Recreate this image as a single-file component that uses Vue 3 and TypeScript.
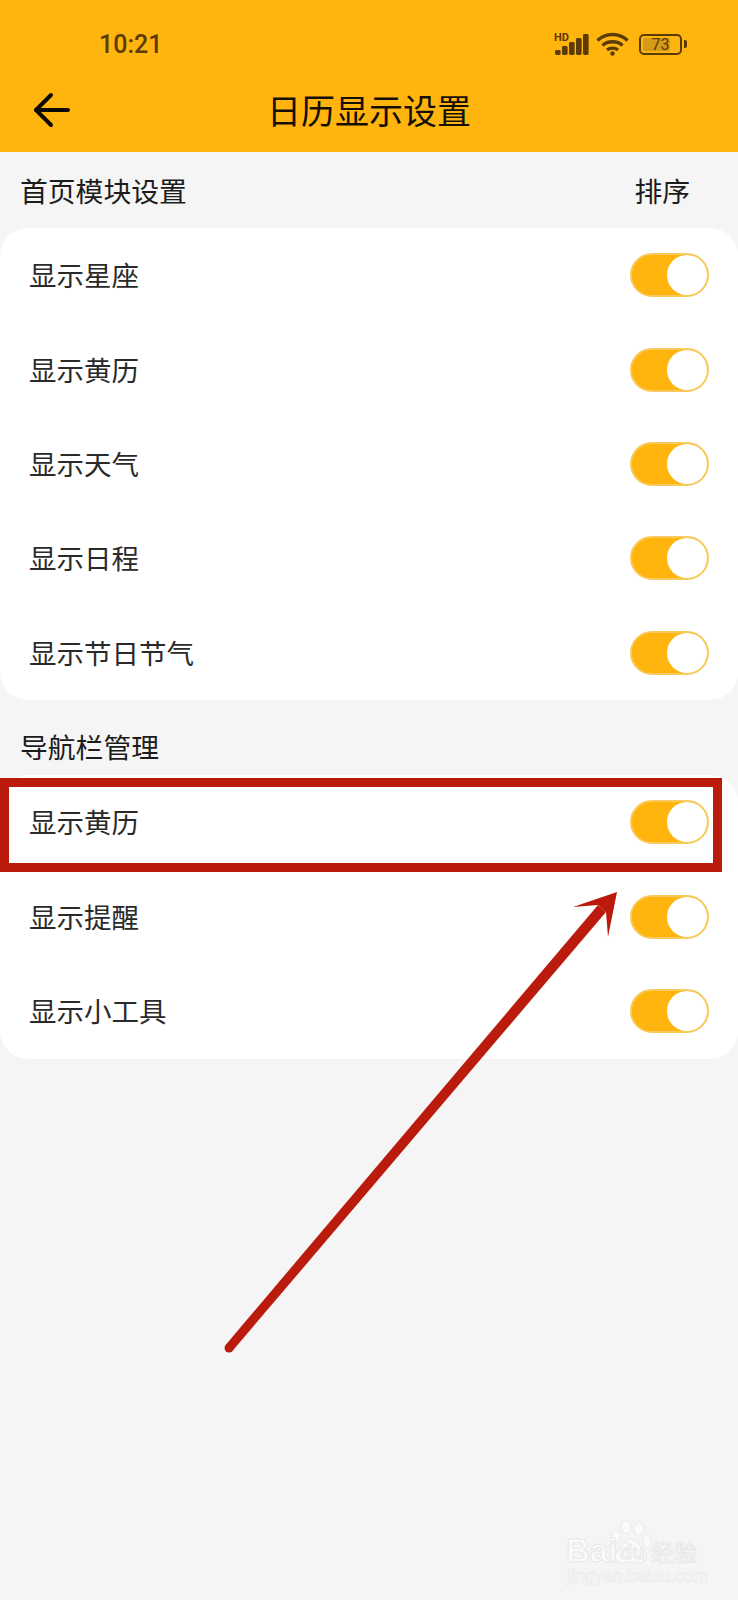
<script setup lang="ts">
import { ref } from 'vue'

interface ToggleRow {
  label: string
  on: boolean
}

const homeRows = ref<ToggleRow[]>([
  { label: '显示星座', on: true },
  { label: '显示黄历', on: true },
  { label: '显示天气', on: true },
  { label: '显示日程', on: true },
  { label: '显示节日节气', on: true },
])

const navRows = ref<ToggleRow[]>([
  { label: '显示黄历', on: true },
  { label: '显示提醒', on: true },
  { label: '显示小工具', on: true },
])

const signalBars = [
  { x: 0, h: 5 },
  { x: 7, h: 9 },
  { x: 14, h: 13 },
  { x: 21, h: 17 },
  { x: 28, h: 21 },
]
</script>

<template>
  <div class="page">
    <header class="app-header">
      <div class="status-bar">
        <span class="time">10:21</span>
        <div class="status-icons">
          <div class="signal">
            <span class="hd">HD</span>
            <svg width="34" height="21" viewBox="0 0 34 21">
              <rect
                v-for="bar in signalBars"
                :key="bar.x"
                :x="bar.x"
                :y="21 - bar.h"
                width="5.6"
                :height="bar.h"
                rx="1.4"
                fill="#5b3b06"
              />
            </svg>
          </div>
          <svg class="wifi" width="33" height="24" viewBox="0 0 33 24" fill="none" stroke="#5b3b06" stroke-width="3.4">
            <path d="M1.5 8.5C9.5 0.5 23.5 0.5 31.5 8.5" />
            <path d="M6.5 13.5C11.5 8.5 21.5 8.5 26.5 13.5" />
            <path d="M11 18C14 15.5 19 15.5 22 18" />
            <circle cx="16.5" cy="21.5" r="2.2" fill="#5b3b06" stroke="none" />
          </svg>
          <div class="battery">
            <div class="battery-body">
              <span class="battery-level"></span>
              <span class="battery-text">73</span>
            </div>
            <span class="battery-nub"></span>
          </div>
        </div>
      </div>
      <div class="nav-bar">
        <svg class="back" width="38" height="36" viewBox="0 0 38 36" fill="none" stroke="#0d0a05" stroke-width="4" stroke-linecap="round" stroke-linejoin="round">
          <path d="M3 18H35" />
          <path d="M18 3L3 18L18 33" />
        </svg>
        <h1 class="title">日历显示设置</h1>
      </div>
    </header>

    <div class="section-head first">
      <span>首页模块设置</span>
      <span class="sort">排序</span>
    </div>
    <section class="card">
      <div v-for="row in homeRows" :key="row.label" class="row">
        <span class="row-label">{{ row.label }}</span>
        <button class="switch" :class="{ on: row.on }" @click="row.on = !row.on">
          <span class="knob"></span>
        </button>
      </div>
    </section>

    <div class="section-head second">
      <span>导航栏管理</span>
    </div>
    <section class="card nav-card">
      <div v-for="row in navRows" :key="row.label" class="row">
        <span class="row-label">{{ row.label }}</span>
        <button class="switch" :class="{ on: row.on }" @click="row.on = !row.on">
          <span class="knob"></span>
        </button>
      </div>
    </section>

    <!-- annotation drawn on top of the screenshot -->
    <div class="mark-box"></div>
    <svg class="mark-arrow" width="738" height="1600" viewBox="0 0 738 1600">
      <path d="M232.4 1351L225.6 1345L598 905L606 912Z" fill="#bb1b0c" />
      <circle cx="229" cy="1348" r="4.5" fill="#bb1b0c" />
      <path d="M617 892L573 907L598 905L606 912L608 937Z" fill="#bb1b0c" />
    </svg>

    <div class="watermark">
      <svg class="paw" width="42" height="46" viewBox="0 0 42 46" fill="#fafafa" stroke="#ebebeb" stroke-width="1.2">
        <ellipse cx="5" cy="16" rx="4.5" ry="6" />
        <ellipse cx="15" cy="7" rx="5" ry="6.5" />
        <ellipse cx="28" cy="9" rx="5" ry="6.5" />
        <ellipse cx="36" cy="21" rx="4.5" ry="6" />
        <path d="M20 19C26 19 28 26 33 30C38 36 34 44 26 43C22 42 17 42 13 43C5 44 1 36 7 30C12 26 14 19 20 19Z" />
      </svg>
      <span class="wm-bai">Bai</span>
      <span class="wm-du">du</span>
      <span class="wm-cn">经验</span>
      <span class="wm-url">jingyan.baidu.com</span>
    </div>
  </div>
</template>

<style scoped>
.page {
  position: relative;
  width: 738px;
  height: 1600px;
  overflow: hidden;
  background: #f5f5f5;
  color: #1c1c1c;
  font-family: "Noto Sans CJK SC", "Noto Sans", sans-serif;
}

.app-header {
  height: 152px;
  background: #ffb40e;
}
.status-bar {
  display: flex;
  justify-content: space-between;
  align-items: center;
  box-sizing: border-box;
  height: 76px;
  padding: 12px 51px 0 99px;
}
.time {
  font-family: Roboto, sans-serif;
  font-size: 25px;
  font-weight: 500;
  color: #5b3b06;
}
.status-icons { display: flex; align-items: center; gap: 9px; }
.signal { position: relative; width: 34px; height: 21px; margin-right: -2px; }
.signal svg { display: block; }
.hd {
  position: absolute;
  top: -1px;
  left: -1px;
  font-family: Roboto, sans-serif;
  font-size: 11px;
  line-height: 10px;
  font-weight: 700;
  color: #5b3b06;
}
.wifi { display: block; }
.battery { display: flex; align-items: center; gap: 2px; margin-left: 1px; }
.battery-body {
  position: relative;
  width: 43px;
  height: 21px;
  box-sizing: border-box;
  border: 2px solid #5b3b06;
  border-radius: 5px;
  display: flex;
  align-items: center;
  justify-content: center;
}
.battery-level {
  position: absolute;
  left: 2px;
  top: 2px;
  bottom: 2px;
  width: 27px;
  border-radius: 2px;
  background: #d59a17;
}
.battery-text {
  position: relative;
  font-family: Roboto, sans-serif;
  font-size: 16px;
  line-height: 17px;
  color: #5b3b06;
}
.battery-nub { width: 3px; height: 8px; border-radius: 0 2px 2px 0; background: #5b3b06; }

.nav-bar {
  position: relative;
  display: flex;
  align-items: center;
  justify-content: center;
  height: 72px;
}
.back { position: absolute; left: 33px; top: 16px; }
.title {
  margin: 0 0 4px;
  font-size: 34px;
  font-weight: 400;
  line-height: 66px;
  color: #150f05;
}

.section-head {
  display: flex;
  justify-content: space-between;
  align-items: center;
  box-sizing: border-box;
  height: 76px;
  font-size: 27.8px;
  line-height: 40px;
  color: #1c1c1c;
}
.section-head.first { padding: 0 48px 0 20px; }
.section-head.second { height: 75px; padding: 18px 48px 0 20px; }

.card {
  background: #fff;
  border-radius: 28px;
}
.nav-card { padding-bottom: 1px; }
.row {
  display: flex;
  align-items: center;
  justify-content: space-between;
  height: 94.4px;
  padding: 0 29px;
}
.row-label { margin-bottom: 2px; font-size: 27.5px; color: #2a2a2a; }

.switch {
  position: relative;
  width: 79px;
  height: 44px;
  padding: 0;
  border: 2px solid #f8ca5c;
  border-radius: 22px;
  background: #e5e5e5;
  box-sizing: border-box;
  cursor: pointer;
}
.switch.on { background: #ffb40e; }
.knob {
  position: absolute;
  top: 0;
  right: 0;
  width: 40px;
  height: 40px;
  border-radius: 50%;
  background: #fff;
}

.mark-box {
  position: absolute;
  left: 0;
  top: 778px;
  width: 722px;
  height: 94px;
  box-sizing: border-box;
  border: 9px solid #bb1b0c;
}
.mark-arrow { position: absolute; left: 0; top: 0; pointer-events: none; }

.watermark { position: absolute; left: 0; top: 0; pointer-events: none; }
.paw { position: absolute; left: 611px; top: 1520px; }
.wm-bai, .wm-du, .wm-cn, .wm-url {
  position: absolute;
  white-space: nowrap;
  color: #fafafa;
  -webkit-text-stroke: 1px #e8e8e8;
  font-family: "Liberation Sans", sans-serif;
}
.wm-bai { left: 566px; top: 1533px; font-size: 33px; line-height: 36px; font-weight: 700; }
.wm-du { left: 620px; top: 1541px; font-size: 20px; line-height: 22px; font-weight: 700; color: #f5f5f5; }
.wm-cn { left: 651px; top: 1537px; font-size: 23px; line-height: 28px; font-family: "Noto Sans CJK SC", sans-serif; }
.wm-url { left: 567px; top: 1566px; font-size: 17.5px; line-height: 20px; -webkit-text-stroke-width: 0.6px; }
</style>
